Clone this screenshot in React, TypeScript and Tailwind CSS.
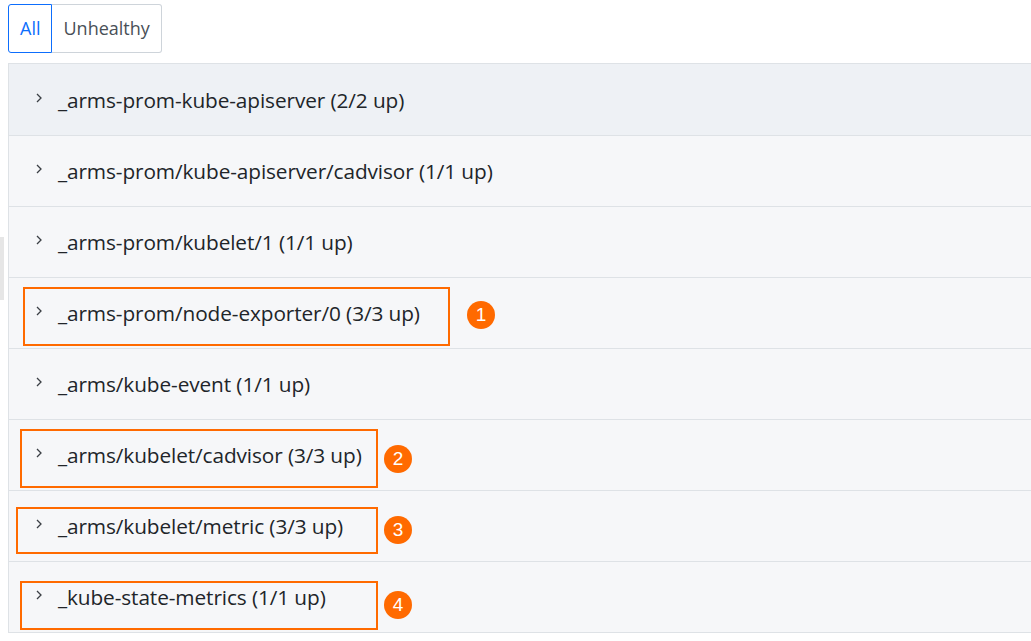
import React from "react";

const rows = [
  "_arms-prom-kube-apiserver (2/2 up)",
  "_arms-prom/kube-apiserver/cadvisor (1/1 up)",
  "_arms-prom/kubelet/1 (1/1 up)",
  "_arms-prom/node-exporter/0 (3/3 up)",
  "_arms/kube-event (1/1 up)",
  "_arms/kubelet/cadvisor (3/3 up)",
  "_arms/kubelet/metric (3/3 up)",
  "_kube-state-metrics (1/1 up)",
];

// annotation overlays: box + numbered badge
const marks = [
  { n: 1, box: "left-[23px] top-[287px] w-[427px] h-[59px]", dot: "left-[467px] top-[301px]" },
  { n: 2, box: "left-[20px] top-[429px] w-[358px] h-[59px]", dot: "left-[384px] top-[445px]" },
  { n: 3, box: "left-[16px] top-[507px] w-[362px] h-[47px]", dot: "left-[384px] top-[516px]" },
  { n: 4, box: "left-[20px] top-[581px] w-[358px] h-[49px]", dot: "left-[384px] top-[591px]" },
];

function Chevron() {
  return (
    <svg width="8" height="12" viewBox="0 0 8 12" className="shrink-0 -mt-[4px]">
      <path d="M2 2 L6 6 L2 10" fill="none" stroke="#3a3f44" strokeWidth="1.3" />
    </svg>
  );
}

export default function App() {
  return (
    <div
      className="relative w-[1031px] h-[641px] overflow-hidden bg-white text-[#212529]"
      style={{ fontFamily: '"Open Sans", "Noto Sans", sans-serif' }}
    >
      {/* filter buttons */}
      <div className="flex pl-2 pt-1">
        <button className="h-[49px] px-[11px] text-[18px] text-[#0d6efd] border border-[#0d6efd] rounded-l-[3px]">
          All
        </button>
        <button className="h-[49px] px-[11px] text-[18px] text-[#495057] border border-l-0 border-[#ced4da] rounded-r-[3px]">
          Unhealthy
        </button>
      </div>

      {/* target list */}
      <div className="ml-2 mt-[10px] border-l border-t border-[#dee2e6]">
        {rows.map((r, i) => (
          <div
            key={r}
            className={
              "flex items-center border-b border-[#dee2e6] pl-[26px] gap-[15px] " +
              (i === 0 ? "h-[72px] bg-[#eef1f5]" : "h-[71px] bg-[#f6f7f9]")
            }
          >
            <Chevron />
            <span className="text-[20.8px] tracking-[-0.1px] mt-[2px]">{r}</span>
          </div>
        ))}
      </div>

      <div className="absolute left-0 top-[237px] w-[4px] h-[63px] bg-[#e6e6e6]" />

      {marks.map((m) => (
        <React.Fragment key={m.n}>
          <div className={"absolute border-[2.5px] border-[#ff6a00] " + m.box} />
          <div
            className={
              "absolute w-[28px] h-[28px] rounded-full bg-[#ff6a00] text-white flex items-center justify-center text-[19px] " +
              m.dot
            }
            style={{ fontFamily: '"Liberation Sans", Arial, sans-serif' }}
          >
            {m.n}
          </div>
        </React.Fragment>
      ))}
    </div>
  );
}
